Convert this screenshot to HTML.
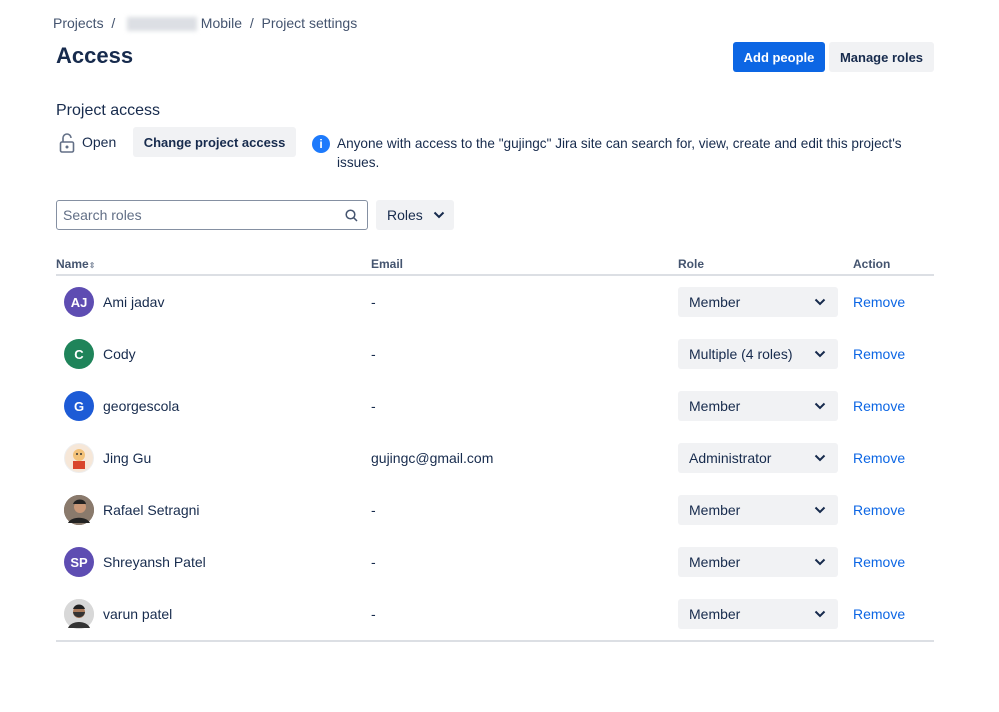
<!DOCTYPE html>
<html><head><meta charset="utf-8"><style>
*{box-sizing:border-box;margin:0;padding:0}
body{width:999px;height:712px;background:#fff;font-family:"Liberation Sans",sans-serif;color:#172b4d;font-size:14px;position:relative;overflow:hidden}
.a{position:absolute;white-space:nowrap}
.btn{position:absolute;border-radius:3px;background:#f1f2f4;font-size:14px;display:flex;align-items:center;justify-content:center;color:#172b4d}
.row{position:absolute;left:56px;width:878px;height:52px}
.av{position:absolute;left:8px;top:11px;width:30px;height:30px;border-radius:50%;color:#fff;font-size:13px;font-weight:bold;display:flex;align-items:center;justify-content:center}
.nm{position:absolute;left:47px;top:18px}
.em{position:absolute;left:315px;top:18px}
.sel{position:absolute;left:622px;top:11px;width:160px;height:30px;background:#f1f2f4;border-radius:3px;padding-left:11px;line-height:30px}
.sel svg{position:absolute;right:12px;top:11px}
.rm{position:absolute;left:797px;top:18px;color:#0c66e4}
</style></head><body>
<div class="a" style="left:53px;top:15px;color:#44546f">Projects&nbsp;&nbsp;/&nbsp;&nbsp;&nbsp;<span style="display:inline-block;width:70px;height:14px;background:#dcdfe4;filter:blur(2px);vertical-align:middle"></span>&nbsp;Mobile&nbsp;&nbsp;/&nbsp;&nbsp;Project settings</div>
<div class="a" style="left:56px;top:43px;font-size:22px;font-weight:bold;color:#172b4d">Access</div>
<div class="btn" style="left:733px;top:42px;width:92px;height:30px;background:#0c66e4;color:#fff;font-weight:bold;font-size:13px">Add people</div>
<div class="btn" style="left:829px;top:42px;width:105px;height:30px;font-weight:bold;font-size:13px">Manage roles</div>
<div class="a" style="left:56px;top:102px;font-size:16px">Project access</div>
<svg class="a" style="left:59px;top:133px" width="16" height="20" viewBox="0 0 16 20"><path d="M4 9V5a4 4 0 0 1 8 0" fill="none" stroke="#626f86" stroke-width="1.6"/><rect x="1.5" y="9" width="13" height="10" rx="1.5" fill="none" stroke="#626f86" stroke-width="1.6"/><circle cx="8" cy="14" r="1.5" fill="#626f86"/></svg>
<div class="a" style="left:82px;top:134px">Open</div>
<div class="btn" style="left:133px;top:127px;width:163px;height:30px;font-weight:bold;font-size:13px">Change project access</div>
<div class="a" style="left:312px;top:135px;width:18px;height:18px;border-radius:50%;background:#1d7afc;color:#fff;font-size:12px;font-weight:bold;text-align:center;line-height:18px">i</div>
<div class="a" style="left:337px;top:134px;line-height:19px;font-size:13.6px">Anyone with access to the "gujingc" Jira site can search for, view, create and edit this project's<br>issues.</div>
<div class="a" style="left:56px;top:200px;width:312px;height:30px;border:1px solid #8590a2;border-radius:3px;padding-left:6px;line-height:28px;color:#626f86">Search roles
<svg style="position:absolute;right:9px;top:8px" width="13" height="13" viewBox="0 0 13 13"><circle cx="5.5" cy="5.5" r="4.3" fill="none" stroke="#44546f" stroke-width="1.5"/><path d="M8.7 8.7L12 12" stroke="#44546f" stroke-width="1.5"/></svg></div>
<div class="btn" style="left:376px;top:200px;width:78px;height:30px;justify-content:flex-start;padding-left:11px">Roles<svg style="margin-left:10px" width="12" height="8" viewBox="0 0 12 8"><path d="M1.5 1.5L6 6l4.5-4.5" fill="none" stroke="#172b4d" stroke-width="2"/></svg></div>
<div class="a" style="left:56px;top:257px;font-size:12px;font-weight:bold;color:#44546f">Name<span style="font-size:8px;color:#8590a2">&#8661;</span></div>
<div class="a" style="left:371px;top:257px;font-size:12px;font-weight:bold;color:#44546f">Email</div>
<div class="a" style="left:678px;top:257px;font-size:12px;font-weight:bold;color:#44546f">Role</div>
<div class="a" style="left:853px;top:257px;font-size:12px;font-weight:bold;color:#44546f">Action</div>
<div class="a" style="left:56px;top:274px;width:878px;height:2px;background:#dcdfe4"></div>
<div class="a" style="left:56px;top:640px;width:878px;height:2px;background:#dcdfe4"></div>

<div class="row" style="top:276px"><div class="av" style="background:#5e4db2">AJ</div><div class="nm">Ami jadav</div><div class="em">-</div><div class="sel">Member<svg width="12" height="8" viewBox="0 0 12 8"><path d="M1.5 1.5L6 6l4.5-4.5" fill="none" stroke="#172b4d" stroke-width="2"/></svg></div><div class="rm">Remove</div></div>
<div class="row" style="top:328px"><div class="av" style="background:#1f845a">C</div><div class="nm">Cody</div><div class="em">-</div><div class="sel">Multiple (4 roles)<svg width="12" height="8" viewBox="0 0 12 8"><path d="M1.5 1.5L6 6l4.5-4.5" fill="none" stroke="#172b4d" stroke-width="2"/></svg></div><div class="rm">Remove</div></div>
<div class="row" style="top:380px"><div class="av" style="background:#1d5bd6">G</div><div class="nm">georgescola</div><div class="em">-</div><div class="sel">Member<svg width="12" height="8" viewBox="0 0 12 8"><path d="M1.5 1.5L6 6l4.5-4.5" fill="none" stroke="#172b4d" stroke-width="2"/></svg></div><div class="rm">Remove</div></div>
<div class="row" style="top:432px"><div class="av" style="background:#f6e7d8;border:1px solid #eee"><svg width="26" height="26" viewBox="0 0 26 26"><circle cx="13" cy="10" r="6" fill="#f3c27a"/><rect x="7" y="16" width="12" height="8" fill="#d9452b"/><circle cx="11" cy="9" r="1" fill="#333"/><circle cx="15" cy="9" r="1" fill="#333"/></svg></div><div class="nm">Jing Gu</div><div class="em">gujingc@gmail.com</div><div class="sel">Administrator<svg width="12" height="8" viewBox="0 0 12 8"><path d="M1.5 1.5L6 6l4.5-4.5" fill="none" stroke="#172b4d" stroke-width="2"/></svg></div><div class="rm">Remove</div></div>
<div class="row" style="top:484px"><div class="av" style="background:#6b5a4e"><svg width="30" height="30" viewBox="0 0 30 30"><circle cx="15" cy="15" r="15" fill="#8a7a6c"/><circle cx="16" cy="12" r="6" fill="#c99878"/><path d="M4 28c3-7 19-7 22 0" fill="#222"/><path d="M9 9c2-6 12-6 13 0" fill="#222"/></svg></div><div class="nm">Rafael Setragni</div><div class="em">-</div><div class="sel">Member<svg width="12" height="8" viewBox="0 0 12 8"><path d="M1.5 1.5L6 6l4.5-4.5" fill="none" stroke="#172b4d" stroke-width="2"/></svg></div><div class="rm">Remove</div></div>
<div class="row" style="top:536px"><div class="av" style="background:#5e4db2">SP</div><div class="nm">Shreyansh Patel</div><div class="em">-</div><div class="sel">Member<svg width="12" height="8" viewBox="0 0 12 8"><path d="M1.5 1.5L6 6l4.5-4.5" fill="none" stroke="#172b4d" stroke-width="2"/></svg></div><div class="rm">Remove</div></div>
<div class="row" style="top:588px"><div class="av" style="background:#ddd"><svg width="30" height="30" viewBox="0 0 30 30"><circle cx="15" cy="15" r="15" fill="#d8d8d8"/><circle cx="15" cy="13" r="6" fill="#a9795a"/><path d="M4 29c3-8 19-8 22 0" fill="#333"/><path d="M9 13c1 7 11 7 12 0" fill="#333"/><path d="M9 10c2-6 10-6 12 0" fill="#222"/></svg></div><div class="nm">varun patel</div><div class="em">-</div><div class="sel">Member<svg width="12" height="8" viewBox="0 0 12 8"><path d="M1.5 1.5L6 6l4.5-4.5" fill="none" stroke="#172b4d" stroke-width="2"/></svg></div><div class="rm">Remove</div></div>
</body></html>
